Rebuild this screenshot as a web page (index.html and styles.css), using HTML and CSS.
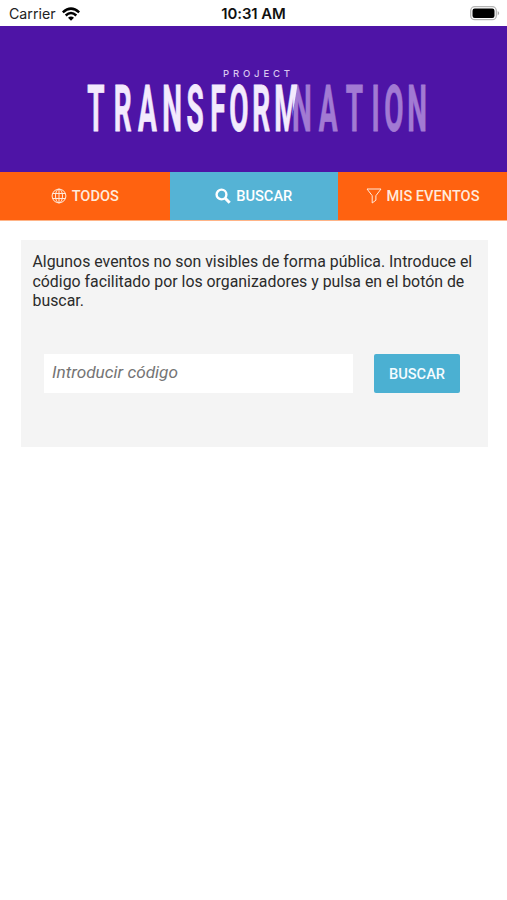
FILE: index.html
```html
<!DOCTYPE html>
<html lang="es">
<head>
<meta charset="utf-8">
<title>Project Transformnation</title>
<link rel="stylesheet" href="styles.css">
</head>
<body>
<div class="status">
  <div class="carrier"><span>Carrier</span>
    <svg width="18" height="14" viewBox="0 0 18 14"><g fill="none" stroke="#000" stroke-width="2.5"><path d="M.8 5.4Q9-2.2 17.200 5.400"/><path d="M3.700 8.500Q9 3.600 14.300 8.500"/></g><path d="M6 10.700Q9 8.300 12 10.700L9 13.800Z"/></svg>
  </div>
  <time>10:31 AM</time>
  <svg class="battery" width="31" height="15" viewBox="0 0 31 15"><rect x=".7" y=".7" width="25.600" height="13" rx="4" fill="#fff" stroke="#b5b5b5" stroke-width="1.300"/><rect x="2.500" y="2.500" width="22" height="9.400" rx="2.200"/><path d="M27.700 5q3 2.200 0 4.400z" fill="#aaa"/></svg>
</div>
<header class="hero">
  <svg width="507" height="146" viewBox="0 0 507 146" role="img" aria-label="Project Transformnation">
    <clipPath id="slant"><path d="M0 50H299L288 115H0z"/></clipPath>
    <text class="project" x="223" y="50.500" textLength="67">PROJECT</text>
    <g transform="scale(.43 1)">
      <text class="word ghost" y="105.500" x="702.300 763 824.400 873.300 916.300 969.800">NATION</text>
    </g>
    <g clip-path="url(#slant)"><g transform="scale(.43 1)">
      <text class="word" y="105.500" x="223.300 285.500 343 400 453.500 507 555.800 607.500 666.300">TRANSFORM</text>
    </g></g>
  </svg>
</header>
<nav class="tabs">
  <a class="tab todos"><svg width="16" height="16" viewBox="0 0 16 16" fill="none" stroke="currentColor"><circle cx="8" cy="8" r="6.900"/><ellipse cx="8" cy="8" rx="3.500" ry="6.900"/><path d="M8 1v14M1.500 5.500h13M1.500 10.500h13"/></svg><span>TODOS</span></a>
  <a class="tab active"><svg width="16" height="16" viewBox="0 0 16 16" fill="none" stroke="currentColor"><circle cx="6.500" cy="6.500" r="4.900" stroke-width="2.400"/><path d="M10.200 10.200l4.500 4.500" stroke-width="3"/></svg><span>BUSCAR</span></a>
  <a class="tab mis"><svg width="16" height="16" viewBox="0 0 16 16" fill="none" stroke="currentColor" stroke-linejoin="round"><path d="M1 1h14L9.900 7.700v4.500l-3.700 2.800V7.700z"/></svg><span>MIS EVENTOS</span></a>
</nav>
<main class="card">
  <p>Algunos eventos no son visibles de forma pública. Introduce el código facilitado por los organizadores y pulsa en el botón de buscar.</p>
  <form class="search">
    <input type="text" placeholder="Introducir código">
    <button type="button">BUSCAR</button>
  </form>
</main>
</body>
</html>
```
FILE: styles.css
```css
* { box-sizing: border-box; }
body { margin: 0; background: #fff; font-family: Roboto, sans-serif; color: #2b2b2b; }
svg { display: block; flex: none; }
.status { height: 26px; display: grid; grid-template-columns: 1fr auto 1fr; align-items: center; padding: 1px 7px 0 7px; font-family: Inter, sans-serif; font-size: 14.2px; color: #222; }
.carrier { display: flex; align-items: center; gap: 6px; padding-left: 2px; }
.status time { font-weight: 600; font-size: 14.900px; letter-spacing: -.050px; color: #111; }
.battery { justify-self: end; margin-right: -1px; }
.hero { height: 146px; background: #4e14a6; }
.project { font: 500 9.500px Inter, sans-serif; fill: #d8c6f0; }
.word { font: 700 65px Roboto, sans-serif; fill: #f3eafd; stroke: #f3eafd; stroke-width: .8px; text-anchor: middle; }
.ghost { fill: #a27ad3; stroke: #a27ad3; }
.tabs { height: 49px; display: grid; grid-template-columns: 169.500px 168.500px 1fr; border-bottom: 1px solid #ffb487; }
.tab { display: flex; align-items: center; justify-content: center; gap: 5px; background: #ff6210; color: #ffeadb; font-size: 14.600px; font-weight: 500; }
.tab span { white-space: nowrap; }
.active { background: #55b3d5; color: #fff; }
.card { margin: 19px 19px 0 20.500px; height: 207px; padding: 12px 12px 0; background: #f4f4f4; }
.card p { margin: 0; font-size: 15.860px; line-height: 19.700px; }
.search { display: flex; gap: 21px; margin: 42.500px 16px 0 11.500px; }
.search input { width: 309px; height: 39px; border: 0; padding: 0 8px 3px; background: #fff; font: italic 17.200px Roboto, sans-serif; }
.search input::placeholder { color: #757575; opacity: 1; }
.search button { width: 86px; height: 39px; border: 0; border-radius: 2px; padding: 2px 0 0; background: #4bb0d2; color: #f5fcff; font: 500 14.600px Roboto, sans-serif; }
```
